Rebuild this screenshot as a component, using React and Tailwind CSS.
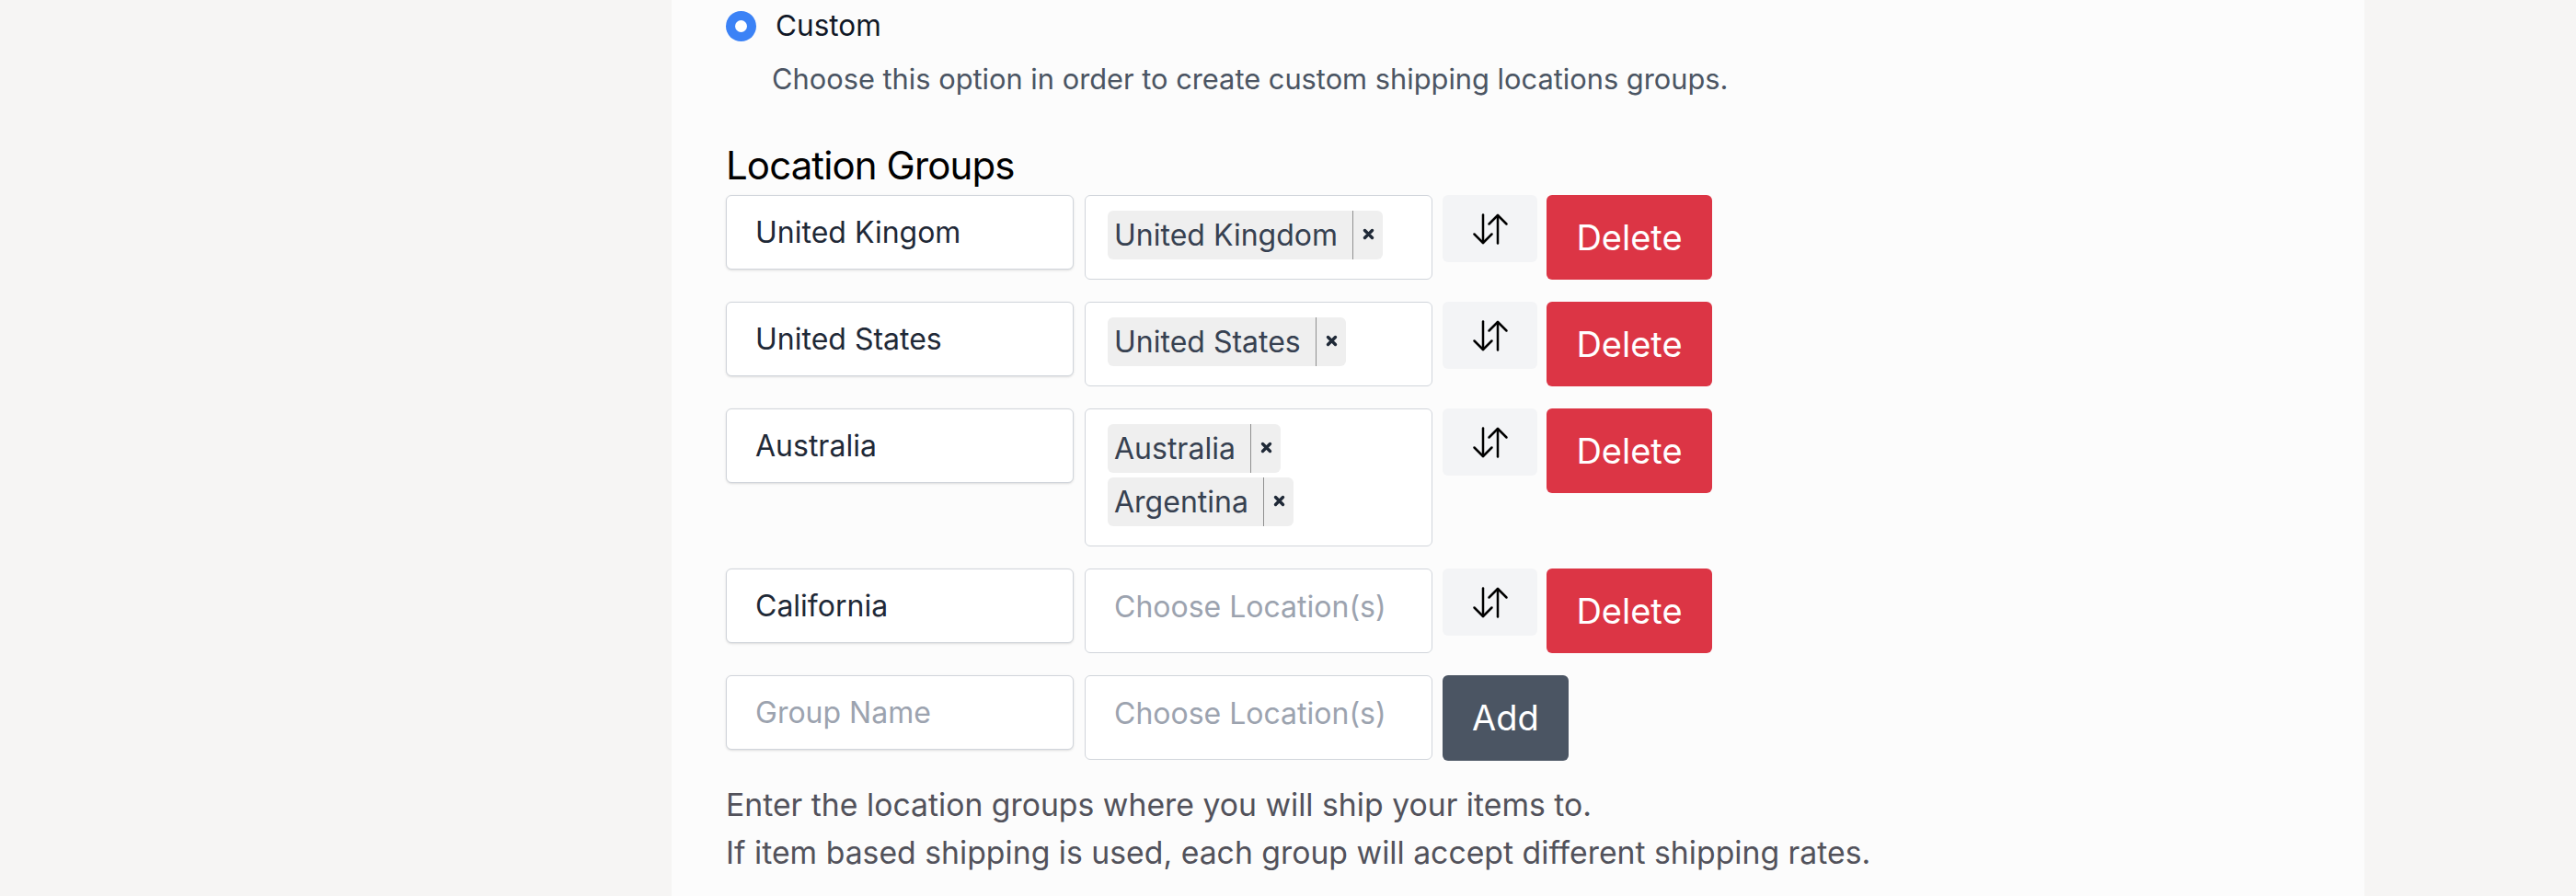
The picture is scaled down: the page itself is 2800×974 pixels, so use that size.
import React from "react";

const font = { fontFamily: "Inter, 'Noto Sans', sans-serif" };

function SortIcon() {
  return (
    <svg width="40" height="34" viewBox="0 0 40 34" fill="none" stroke="#000" strokeWidth="2.5" strokeLinecap="round" strokeLinejoin="round">
      <path d="M12 1.5V32" />
      <path d="M2.5 22.5L12 32l9.5-9.5" />
      <path d="M28 2v30.5" />
      <path d="M18.5 11.5L28 2l9.5 9.5" />
    </svg>
  );
}

function Chip({ label }) {
  return (
    <div className="flex h-[53px] items-stretch rounded-[6px] bg-[#efefef] mb-[5px] mr-[6px]">
      <span className="flex items-center pl-[7px] pr-[16px] text-[32px] text-[#374151]">{label}</span>
      <span className="w-px bg-[#8f8f8f]" />
      <span className="flex items-center pl-[10px] pr-[9px] pb-[3px]">
        <svg width="13" height="13" viewBox="0 0 13 13" stroke="#1f2937" strokeWidth="3.4" strokeLinecap="round">
          <path d="M2.5 2.5l8 8M10.5 2.5l-8 8" />
        </svg>
      </span>
    </div>
  );
}

function NameBox({ value, placeholder }) {
  return (
    <div className="w-[378px] h-[81px] shrink-0 flex items-center rounded-[6px] border border-[#d1d5db] bg-white shadow-sm px-[31px]">
      {value ? (
        <span className="text-[32px] text-[#1f2937]">{value}</span>
      ) : (
        <span className="text-[32px] text-[#9ca3af]">{placeholder}</span>
      )}
    </div>
  );
}

function LocBox({ chips }) {
  return (
    <div className="ml-[12px] w-[378px] shrink-0 rounded-[6px] border border-[#d1d5db] bg-white pt-[16px] pb-[16px] px-[24px]">
      {chips.length ? (
        <div className="flex flex-col items-start">
          {chips.map((c) => (
            <Chip key={c} label={c} />
          ))}
        </div>
      ) : (
        <div className="h-[53px] mb-[5px] flex items-center pl-[7px] pb-[4px] text-[32px] text-[#9ca3af]">Choose Location(s)</div>
      )}
    </div>
  );
}

function Row({ name, chips }) {
  return (
    <div className="flex items-start">
      <NameBox value={name} />
      <LocBox chips={chips} />
      <div className="ml-[11px] w-[103px] h-[73px] shrink-0 rounded-[6px] bg-[#f3f4f6] flex items-center justify-center">
        <SortIcon />
      </div>
      <div className="ml-[10px] w-[180px] h-[92px] shrink-0 rounded-[6px] bg-[#dc3545] flex items-center justify-center text-white text-[38px]">
        Delete
      </div>
    </div>
  );
}

export default function App() {
  const rows = [
    { name: "United Kingom", chips: ["United Kingdom"] },
    { name: "United States", chips: ["United States"] },
    { name: "Australia", chips: ["Australia", "Argentina"] },
    { name: "California", chips: [] },
  ];
  return (
    <div className="w-[2800px] h-[974px] bg-[#f6f5f4] overflow-hidden" style={font}>
      <div className="ml-[730px] w-[1840px] h-[974px] bg-[#fcfcfc] pl-[59px] pt-[2px]">
        <div className="flex items-center h-[52px]">
          <div className="w-[33px] h-[33px] rounded-full bg-[#3b82f6] flex items-center justify-center">
            <div className="w-[13px] h-[13px] rounded-full bg-white" />
          </div>
          <span className="ml-[21px] text-[31.5px] text-[#111827]">Custom</span>
        </div>
        <p className="mt-[6px] pl-[50px] text-[30.8px] leading-[52px] text-[#4b5563]">
          Choose this option in order to create custom shipping locations groups.
        </p>
        <h2 className="mt-[41px] text-[42px] leading-[54px] tracking-[-0.9px] text-black">Location Groups</h2>
        <div className="mt-[5px] flex flex-col gap-[24px]">
          {rows.map((r) => (
            <Row key={r.name} name={r.name} chips={r.chips} />
          ))}
          <div className="flex items-start">
            <NameBox placeholder="Group Name" />
            <LocBox chips={[]} />
            <div className="ml-[11px] w-[137px] h-[93px] shrink-0 rounded-[6px] bg-[#4b5563] flex items-center justify-center text-white text-[38px]">
              Add
            </div>
          </div>
        </div>
        <div className="mt-[22px] text-[33.75px] leading-[52px] text-[#52525b]">
          <p>Enter the location groups where you will ship your items to.</p>
          <p>If item based shipping is used, each group will accept different shipping rates.</p>
        </div>
      </div>
    </div>
  );
}
